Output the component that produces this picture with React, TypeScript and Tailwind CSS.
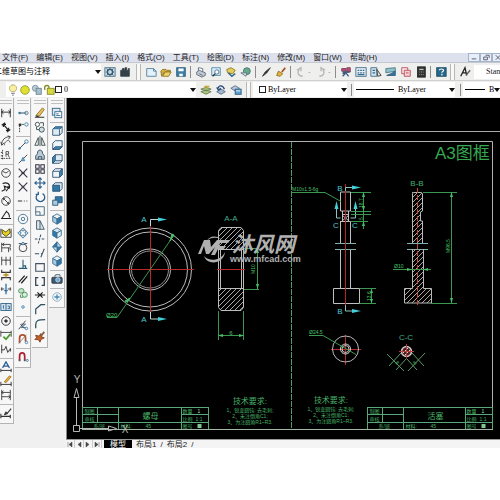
import { ReactNode } from "react";

const icons: Record<string, ReactNode> = {
  // dimension toolbar
  linear: <path d="M2 2v10M12 2v10M2 6h10M4 4L2 6l2 2M10 4l2 2-2 2" stroke="#222" />,
  aligned: <path d="M2 5l4-3M8 13l4-3M4 4l6 7M4 7V4h3M10 8v3H7" stroke="#222" strokeWidth="1.4" />,
  arc: (
    <g>
      <path d="M2 11c0-5 4-9 9-9M1 8l1 4 3-3M9 1l3 1-2 3" stroke="#333" />
      <path d="M5 12c0-3 2-5 5-6l2 3" stroke="#555" />
    </g>
  ),
  ordinate: (
    <g>
      <path d="M3 1v12M1 11h11M1 4h3M1 8h3" stroke="#333" strokeDasharray="2 1" />
      <path d="M7 9V3h3v3H7M9 6l2 4" stroke="#444" />
    </g>
  ),
  radius: (
    <g stroke="#333">
      <circle cx="7" cy="7" r="5" />
      <path d="M7 7l-4-2M7 7l3-2" />
    </g>
  ),
  jogged: <path d="M3 3c5-2 9 0 8 5M2 12l4-2-1-4 5 2-3 4M9 6l2 3" stroke="#222" strokeWidth="1.3" />,
  diameter: (
    <g stroke="#333">
      <circle cx="7" cy="7" r="5" />
      <path d="M4 4l6 6M4 6V4h2M10 8v2H8" />
    </g>
  ),
  angular: <path d="M8 2L2 11h11M7 3c3 1 4 3 4 7" stroke="#222" strokeWidth="1.2" />,
  quick: (
    <g>
      <path d="M1 2v10h12V2" stroke="#333" />
      <path d="M2 3l5 3 4-4 1 5-5 4-4-3z" fill="#e8d020" stroke="#4a4210" />
    </g>
  ),
  baseline: <path d="M2 2v11M2 4h10v3M2 8h10v3M5 2L3 4l2 2M10 8v5" stroke="#333" />,
  cont: <path d="M2 2v10M7 2v10M12 2v10M2 6h10" stroke="#333" />,
  space: (
    <g>
      <path d="M2 1v3h10V1M2 13v-3h10v3" stroke="#333" strokeWidth="1.3" />
      <path d="M4 7h6M7 4v6" stroke="#b89020" strokeWidth="1.6" />
    </g>
  ),
  dimbreak: (
    <g>
      <path d="M1 7h4M9 7h4M2 5v4M12 5v4" stroke="#333" />
      <path d="M7 1v12M5 9h4" stroke="#2b6fa0" strokeWidth="1.5" />
    </g>
  ),
  tolerance: (
    <g>
      <rect x="1" y="3" width="12" height="8" stroke="#2b5f85" fill="#cfe0ee" />
      <path d="M7 3v8M4 5v4M9 6h2v3H9" stroke="#2b5f85" />
    </g>
  ),
  center: (
    <g stroke="#222">
      <circle cx="7" cy="7" r="5" />
      <path d="M7 5v4M5 7h4" strokeWidth="1.5" />
    </g>
  ),
  inspect: (
    <g>
      <path d="M1 2v7M13 2v7M1 4h12" stroke="#333" />
      <path d="M4 9l3 3 5-6" stroke="#4a9a30" strokeWidth="2" />
    </g>
  ),
  joglinear: <path d="M2 2v10M2 8h3l2-4 2 7 2-3h2M12 6v4" stroke="#222" />,
  textedit: (
    <g>
      <path d="M3 8l4-7 4 7M4 6h6" stroke="#2b5f95" strokeWidth="1.5" />
      <path d="M1 9v4M13 9v4M1 11h12" stroke="#222" />
    </g>
  ),
  pencil: (
    <g>
      <path d="M5 8l6-7 2 1-6 7z" fill="#e0b040" stroke="#a87820" />
      <path d="M1 8v5M13 8v5M1 11h12" stroke="#222" />
    </g>
  ),
  update: <path d="M2 1v12M12 1v12M2 4h10M2 9h10M4 2L2 4l2 2M10 7l2 2-2 2" stroke="#333" />,
  brush: <path d="M1 8v5M12 9v4M1 11h11M5 9l3-1 5-6M5 9l2-3 2 2" stroke="#333" strokeWidth="1.3" />,
  // object snap
  track: (
    <g>
      <path d="M3 7h8" stroke="#333" />
      <circle cx="3" cy="7" r="1.5" fill="#3a7ca5" />
      <circle cx="11" cy="7" r="2" stroke="#3a7ca5" />
    </g>
  ),
  from: (
    <g>
      <path d="M3 13V4h6" stroke="#333" strokeDasharray="2 1" />
      <circle cx="11" cy="4" r="2" stroke="#3a7ca5" />
      <rect x="2" y="3" width="3" height="3" fill="#333" />
    </g>
  ),
  endpoint: (
    <g>
      <path d="M2 12l8-8" stroke="#333" />
      <circle cx="11" cy="3" r="2" stroke="#3a7ca5" />
      <circle cx="3" cy="11" r="1" fill="#3a7ca5" stroke="#3a7ca5" />
    </g>
  ),
  midpoint: (
    <g>
      <path d="M2 12L12 2" stroke="#333" />
      <path d="M5 9l2-4 2 4z" fill="#8ab4d0" stroke="#3a7ca5" />
    </g>
  ),
  intersect: <path d="M2 2l10 10M12 2L2 12M5 7h4" stroke="#334" strokeWidth="1.3" />,
  apparent: <path d="M2 2l4 4M8 8l4 4M12 2L8 6M6 8l-4 4M6 6h2v2H6z" stroke="#334" strokeWidth="1.2" />,
  extension: <path d="M1 7h5M8 7h1M11 7h1" stroke="#333" strokeWidth="1.2" />,
  centersnap: (
    <g stroke="#3a6c8c">
      <circle cx="7" cy="7" r="5.5" />
      <circle cx="7" cy="7" r="2" />
    </g>
  ),
  quadrant: (
    <g stroke="#3a7ca5">
      <circle cx="7" cy="7" r="4" stroke="#555" />
      <path d="M7 1l2 2-2 2-2-2zM7 9l2 2-2 2-2-2zM3 5l2 2-2 2-2-2zM11 5l2 2-2 2-2-2z" fill="#c0d8e8" />
    </g>
  ),
  tangent: (
    <g stroke="#333">
      <circle cx="7" cy="8" r="4.5" />
      <path d="M2 3h10" />
      <circle cx="7" cy="3" r="1.5" fill="#b8d4e6" stroke="#3a7ca5" />
    </g>
  ),
  perp: <path d="M7 1v10M2 11h10M7 8h3v3" stroke="#2b5f75" strokeWidth="1.3" />,
  parallel: <path d="M2 11L9 3M5 12l7-8" stroke="#222" strokeWidth="1.5" />,
  insert: (
    <g stroke="#3a8a50">
      <rect x="2" y="2" width="6" height="5" rx="2" fill="#c8e4cc" />
      <circle cx="9" cy="9" r="3" fill="#d8eed8" />
      <path d="M4 9v3h3" />
    </g>
  ),
  node: <circle cx="7" cy="7" r="1.5" stroke="#3a7ca5" />,
  nearest: (
    <g>
      <path d="M2 12l8-10M4 6l5 5" stroke="#333" />
      <path d="M5 6h5l-5 4h5" stroke="#3a5c7c" />
      <circle cx="11" cy="11" r="1.5" stroke="#3a7ca5" />
    </g>
  ),
  nosnap: (
    <g>
      <path d="M3 12V6c0-5 7-5 7 0v4" stroke="#b05030" strokeWidth="2" />
      <path d="M2 12L11 2" stroke="#777" />
      <circle cx="11" cy="11" r="1.5" stroke="#3a7ca5" />
    </g>
  ),
  magnet: (
    <g>
      <path d="M3 11V6c0-5 6-5 6 0v5" stroke="#b02030" strokeWidth="2" />
      <path d="M2 11h2M8 11h2" stroke="#555" strokeWidth="2" />
      <circle cx="12" cy="11" r="1.2" stroke="#3a7ca5" />
    </g>
  ),
  // modify
  erase: (
    <g>
      <path d="M3 9l7-8 2 2-6 8z" fill="#e8c060" stroke="#8a6a20" />
      <path d="M1 12h11M2 10l4 2" stroke="#333" strokeWidth="1.3" />
    </g>
  ),
  copy: (
    <g stroke="#344">
      <circle cx="4" cy="4" r="2.5" />
      <circle cx="9" cy="10" r="3" fill="#cfdfea" />
      <path d="M7 2h4v4M3 7v3h3" />
    </g>
  ),
  mirror: <path d="M5 3v9H1zM9 3v9h4zM7 1v12" stroke="#344" />,
  offset: (
    <g stroke="#345">
      <path d="M2 12V8c1-2 2-1 2-3 0-5 6-5 6 0 0 2 2 1 2 3v4z" fill="#b8ccd8" />
      <path d="M5 12V9h4v3" />
    </g>
  ),
  array: <path d="M2 2h4v4H2zM8 2h4v4H8zM2 8h4v4H2zM8 8h4v4H8z" stroke="#334" strokeWidth="1.2" />,
  move: <path d="M7 1v12M1 7h12M5 3l2-2 2 2M5 11l2 2 2-2M3 5L1 7l2 2M11 5l2 2-2 2" stroke="#2b5f8c" strokeWidth="1.3" />,
  rotate: <path d="M10 3a5 5 0 1 1-5 0M5 1v3H2" stroke="#2b5f8c" strokeWidth="1.5" />,
  scale: <path d="M2 2h10v10H2zM2 8h5v4" stroke="#3a6078" />,
  stretch: <path d="M3 2v10h9L7 2zM7 2v10" stroke="#3a5060" fill="#dde8ee" />,
  trim: <path d="M1 7h4M9 7h3M8 2L5 12" stroke="#3a5060" strokeDasharray="3 1" strokeWidth="1.2" />,
  extend: <path d="M1 8h5M8 8h2M12 2L8 12" stroke="#3a5060" strokeWidth="1.2" />,
  breakpoint: <path d="M2 3h10v9H2zM5 3h4" stroke="#456" strokeWidth="1.3" />,
  breaks: <path d="M5 3H2v9h3M9 3h3v9H9" stroke="#345" strokeWidth="1.5" />,
  join: <path d="M1 7h12M4 4l3 3-3 3M10 4L7 7l3 3" stroke="#222" strokeWidth="1.4" />,
  chamfer: <path d="M2 13V7l6-5h5" stroke="#2b5060" strokeWidth="1.4" />,
  fillet: <path d="M2 13V9c0-5 3-6 11-6" stroke="#2b5060" strokeWidth="1.5" />,
  explode: (
    <g>
      <path d="M2 5l4 1 2-3 1 4 3 1-4 2-1 3-2-3-4 0 2-2z" fill="#c06028" stroke="#803818" />
      <path d="M8 6l4-5" stroke="#806040" strokeWidth="2" />
    </g>
  ),
  // views
  named: (
    <g stroke="#2b5f85">
      <rect x="1.5" y="1.5" width="9" height="8" fill="#dce9f3" />
      <rect x="4.5" y="5.5" width="8" height="7" fill="#fff" />
      <path d="M6 10h5M6 8h3" />
    </g>
  ),
  top: (
    <g stroke="#2b5070">
      <path d="M2 5l3-3h8l-3 3z" fill="#3f88b8" />
      <path d="M2 5v7h8V5M10 12l3-3V2" fill="#dceaf2" />
    </g>
  ),
  bottom: (
    <g stroke="#2b5070">
      <path d="M2 5l3-3h8v7l-3 3H2z" fill="#eef4f8" />
      <path d="M2 12l3-3h8l-3 3z" fill="#3f88b8" />
    </g>
  ),
  left: (
    <g stroke="#2b5070">
      <path d="M2 5l3-3h8v7l-3 3H2z" fill="#dceaf2" />
      <path d="M2 5l3-3v7l-3 3z" fill="#3f88b8" />
      <path d="M5 9h8" />
    </g>
  ),
  right: (
    <g stroke="#2b5070">
      <path d="M2 5l3-3h8v7l-3 3H2zM2 5h8" fill="#eef4f8" />
      <path d="M10 5l3-3v7l-3 3z" fill="#3f88b8" />
    </g>
  ),
  front: (
    <g stroke="#2b5070">
      <path d="M2 5l3-3h8v7l-3 3z" fill="#dceaf2" />
      <path d="M2 5h8v7H2z" fill="#2f78a8" />
    </g>
  ),
  back: (
    <g stroke="#2b5070">
      <path d="M5 2h8v7H5z" fill="#2f78a8" />
      <path d="M2 6h6v6H2z" fill="#a8cbe0" />
    </g>
  ),
  isoSW: (
    <g stroke="#3a6c90">
      <path d="M7 1l5 3-5 3-5-3z" fill="#e8f2f8" />
      <path d="M2 4l5 3v6l-5-3z" fill="#a8cbe0" />
      <path d="M12 4L7 7v6l5-3z" fill="#2f78a8" />
    </g>
  ),
  isoSE: (
    <g stroke="#3a6c90">
      <path d="M7 1l5 3-5 3-5-3z" fill="#d0e4f0" />
      <path d="M2 4l5 3v6l-5-3z" fill="#2f78a8" />
      <path d="M12 4L7 7v6l5-3z" fill="#dceaf2" />
    </g>
  ),
  isoNE: (
    <g stroke="#3a6c90">
      <path d="M7 1l5 6-5 6-5-6z" fill="#c8e0ee" />
      <path d="M7 1L2 7h5zM7 13l5-6H7z" fill="#2f78a8" />
    </g>
  ),
  camera: (
    <g>
      <rect x="1" y="5" width="12" height="7" rx="1" fill="#405868" stroke="#303c48" />
      <path d="M4 4l2-2h4l1 2" stroke="#708898" strokeWidth="1.5" />
      <circle cx="8" cy="8" r="2.5" fill="#58a8e0" stroke="#dde" />
    </g>
  ),
  wheel: (
    <g stroke="#8aa8bc">
      <circle cx="7" cy="7" r="5" fill="#eef4f8" />
      <path d="M7 4v6M4 7h6" stroke="#4a88b0" strokeWidth="1.5" />
    </g>
  ),
  // standard toolbar
  gear: (
    <g>
      <rect x="1" y="2" width="12" height="10" fill="#c8dce8" stroke="#4a7088" />
      <circle cx="7" cy="7" r="3" stroke="#38586c" strokeWidth="1.6" />
      <path d="M7 2v2M7 10v2M2 7h2M10 7h2M3 3l2 2M11 11L9 9M11 3L9 5M3 11l2-2" stroke="#38586c" />
    </g>
  ),
  home: <path d="M2 12V5h2V3h2v2h1V2h2v3h2V3h1v9z" fill="#344048" stroke="#344048" />,
  newfile: (
    <g>
      <path d="M2 3h8l3 3v6H2z" fill="#e4f1f9" stroke="#4a7c9c" />
      <path d="M10 3v3h3" stroke="#4a7c9c" />
    </g>
  ),
  open: (
    <g>
      <path d="M1 6l2-2h4l1 1h4v2H5l-3 5z" fill="#d8b040" stroke="#8a7020" />
      <path d="M3 12l3-5h7l-3 5z" fill="#f0d068" stroke="#8a7020" />
    </g>
  ),
  save: (
    <g>
      <rect x="2" y="2" width="10" height="10" fill="#3f80a8" stroke="#2a5878" />
      <path d="M4 3h6v3H4zM5 9h4v3H5z" fill="#fff" />
    </g>
  ),
  print: (
    <g stroke="#5a6878">
      <path d="M4 6V2l5 1v4" fill="#fff" />
      <path d="M2 7l3-2 7 3v3l-4 2-6-3z" fill="#c0cad4" />
      <path d="M5 9l4 2" />
    </g>
  ),
  preview: (
    <g>
      <path d="M2 2h10v9H2z" fill="#dcebf5" stroke="#4a88ac" />
      <circle cx="8" cy="7" r="2.5" fill="#fff" stroke="#3a6888" />
      <path d="M6 9l-3 3" stroke="#333" strokeWidth="1.5" />
    </g>
  ),
  publish: (
    <g>
      <path d="M2 4l5-2 5 3-3 4-6-1z" fill="#e4cc58" stroke="#887828" />
      <path d="M4 8l4 4 4-3" stroke="#3a6888" strokeWidth="1.8" />
    </g>
  ),
  globe: (
    <g>
      <circle cx="8" cy="6" r="4" fill="#6aa888" stroke="#3a7078" />
      <path d="M1 8l6 4 1-4z" fill="#d8e0e4" stroke="#587078" />
    </g>
  ),
  darkbrush: <path d="M3 12l3-5 6-5-4 6z" fill="#333" stroke="#333" />,
  match: (
    <g>
      <path d="M2 11l2-5 5 3-3 3z" fill="#e4b838" stroke="#8a6420" />
      <path d="M8 7l4-5" stroke="#a05020" strokeWidth="2" />
    </g>
  ),
  undo: <path d="M9 12c-5 0-7-4-4-8M2 5l5-3v4" stroke="#b8b8b8" strokeWidth="1.6" />,
  redo: <path d="M5 12c5 0 7-4 4-8M12 5L7 2v4" stroke="#b8b8b8" strokeWidth="1.6" />,
  props: (
    <g>
      <path d="M2 3h5v3H2zM8 2h4v5H8z" fill="#c05078" stroke="#783858" />
      <path d="M3 7h8M3 9l4-1 3 4M3 12l3-3" stroke="#3a5878" strokeWidth="1.5" />
    </g>
  ),
  center2: (
    <g>
      <rect x="1" y="2" width="12" height="10" fill="#e8f2f8" stroke="#3a6888" />
      <path d="M3 5h2M6 5h2M9 5h2M3 8h2M6 8h2M9 8h2M3 10h8" stroke="#3a6888" strokeWidth="1.5" />
    </g>
  ),
  palettes: (
    <g>
      <path d="M1 2h7v10H1z" fill="#d0e4f0" stroke="#3a6888" />
      <path d="M3 5h3M3 8h3" stroke="#3a6888" strokeWidth="1.5" />
      <path d="M8 4l5 7-4 1z" fill="#e0e0e0" stroke="#333" />
    </g>
  ),
  sheet: (
    <g>
      <path d="M1 3l11-1v4L1 8z" fill="#90c0c8" stroke="#487888" />
      <path d="M2 11h10V6L7 9z" fill="#3878a0" stroke="#285878" />
    </g>
  ),
  markup: (
    <g stroke="#b84858">
      <path d="M2 2h7v7H2z" fill="#fbe8ea" />
      <path d="M5 5h7v7H5z" fill="#f4d0d4" />
      <path d="M7 8h3" />
    </g>
  ),
  calc: (
    <g>
      <rect x="3" y="1" width="9" height="12" fill="#333" stroke="#222" />
      <path d="M5 4h5" stroke="#b8c8c8" strokeWidth="1.5" />
      <path d="M5 7h1M7 7h1M9 7h1M5 10h1M7 10h1M9 10h1" stroke="#aaa" />
    </g>
  ),
  help: (
    <g>
      <rect x="2" y="2" width="11" height="10" fill="#28688c" stroke="#184860" />
      <path d="M5 5c0-2 5-2 5 0 0 2-2 1-2 3M8 9v2" stroke="#fff" strokeWidth="1.4" />
    </g>
  ),
  style: (
    <g>
      <path d="M2 12L7 2l2 9M4 8h5" stroke="#222" strokeWidth="1.5" />
      <path d="M8 11l5-6" stroke="#555" strokeWidth="1.5" />
    </g>
  ),
  layer1: (
    <g>
      <path d="M1 6l6-2 6 2-6 2zM1 9l6-2 6 2-6 3z" fill="#a8c878" stroke="#687858" />
      <path d="M5 3h6" stroke="#d0a830" strokeWidth="2" />
    </g>
  ),
  layer2: (
    <g>
      <path d="M2 9l5-3 5 3-5 3z" fill="#a0b8d0" stroke="#506880" />
      <path d="M11 6C9 1 4 1 4 5M2 4l2 3 3-2" stroke="#284878" strokeWidth="1.6" />
    </g>
  ),
  layer3: (
    <g>
      <path d="M1 5l5-3 5 3-5 3z" fill="#b8cce0" stroke="#506880" />
      <rect x="6" y="6" width="7" height="6" fill="#58a0d0" stroke="#285878" />
      <path d="M7 8h5" stroke="#fff" />
    </g>
  ),
  bulb: (
    <g>
      <path d="M5 9c-4-3-2-8 2-8s6 5 2 8z" fill="#f8f0a0" stroke="#a8a068" />
      <path d="M5 11h4M6 13h2" stroke="#667" />
    </g>
  ),
  sun: <circle cx="7" cy="7" r="5" fill="#dfe030" stroke="#909828" />,
  freeze: (
    <g>
      <circle cx="5" cy="5" r="3.5" fill="#b8ccd4" stroke="#7890a0" />
      <rect x="6" y="5" width="6" height="7" fill="#a8c0cc" stroke="#688090" />
    </g>
  ),
  lock: (
    <g>
      <path d="M2 7V4c0-3 5-3 5 0v3" stroke="#808820" strokeWidth="1.5" />
      <rect x="5" y="5" width="8" height="7" fill="#d8d840" stroke="#888820" />
    </g>
  ),
};

const Icon = ({ name }: { name: string }) => (
  <svg viewBox="0 0 14 14" className="size-3 shrink-0" fill="none" aria-hidden="true">
    {icons[name]}
  </svg>
);

const ToolButton = ({ name }: { name: string }) => (
  <button type="button" aria-label={name} className="flex h-[14px] w-[15px] shrink-0 items-center justify-center">
    <Icon name={name} />
  </button>
);

const Sep = () => <span className="mx-[2px] h-3 w-px shrink-0 bg-[#8c8c8c]" />;
const Grip = () => <span className="mx-[2px] h-4 w-[5px] shrink-0 border-x border-[#b8b8b8] bg-[#f8f8f8]" />;

const Caret = () => (
  <svg viewBox="0 0 6 4" className="h-1 w-[6px] shrink-0" aria-hidden="true">
    <path d="M0 0h6L3 4z" fill="#111" />
  </svg>
);

interface PickerProps {
  label: string;
  value: string;
  className: string;
  textClass: string;
  children?: ReactNode;
}

const Picker = ({ label, value, className, textClass, children }: PickerProps) => (
  <label className={`flex h-[15px] items-center bg-white ${className}`}>
    {children}
    <select aria-label={label} className={`min-w-0 flex-1 appearance-none bg-transparent text-[8px] leading-3 text-black outline-none ${textClass}`}>
      <option>{value}</option>
    </select>
    <Caret />
  </label>
);

const menus = [
  "文件(F)", "编辑(E)", "视图(V)", "插入(I)", "格式(O)", "工具(T)",
  "绘图(D)", "标注(N)", "修改(M)", "窗口(W)", "帮助(H)",
];

const columns = [
  [
    ["linear", "aligned", "arc", "ordinate"],
    ["radius", "jogged", "diameter", "angular"],
    ["quick", "baseline", "cont", "space", "dimbreak"],
    ["tolerance", "center", "inspect", "joglinear"],
    ["textedit", "pencil", "update"],
    ["brush"],
  ],
  [
    ["track", "from"],
    ["endpoint", "midpoint", "intersect", "apparent", "extension"],
    ["centersnap", "quadrant", "tangent"],
    ["perp", "parallel", "insert", "node"],
    ["nearest", "nosnap"],
    ["magnet"],
  ],
  [
    [
      "erase", "copy", "mirror", "offset", "array", "move", "rotate", "scale", "stretch",
      "trim", "extend", "breakpoint", "breaks", "join", "chamfer", "fillet", "explode",
    ],
  ],
  [
    ["named"],
    ["top", "bottom", "left", "right", "front", "back"],
    ["isoSW", "isoSE", "isoNE", "isoSW"],
    ["camera"],
    ["wheel"],
  ],
];

const MenuBar = () => (
  <nav className="flex h-[9px] items-center overflow-hidden bg-[#dde1ee] pl-[2px] text-[8px] leading-[9px] text-[#222]">
    {menus.map((menu) => (
      <button key={menu} type="button" className="mr-2 h-[9px] shrink-0 whitespace-nowrap">
        {menu}
      </button>
    ))}
    <div className="-mr-1 ml-auto flex shrink-0">
      {["M3 5h5", "M3 3h4v3H3zM5 1h4v3", "M3 1l5 5M8 1L3 6"].map((d, i) => (
        <button key={d} type="button" aria-label={["最小化", "还原", "关闭"][i]} className="h-[9px] w-3 border border-[#a4b4cc] bg-[#e8eef8]">
          <svg viewBox="0 0 11 7" className="h-[7px] w-full" fill="none" stroke="#556">
            <path d={d} />
          </svg>
        </button>
      ))}
    </div>
  </nav>
);

const StandardBar = () => (
  <div className="flex h-[18px] items-center overflow-hidden border-t border-[#c4c8d0]">
    <Picker label="工作空间" value="二维草图与注释" className="w-[101px] shrink-0" textClass="-ml-[6px]" />
    <span className="w-px shrink-0" />
    <ToolButton name="gear" />
    <ToolButton name="home" />
    <span className="w-[2px] shrink-0" />
    <Grip />
    <ToolButton name="newfile" />
    <ToolButton name="open" />
    <ToolButton name="save" />
    <Sep />
    {["print", "preview", "publish", "globe"].map((n) => <ToolButton key={n} name={n} />)}
    <Sep />
    <ToolButton name="darkbrush" />
    <ToolButton name="match" />
    <Sep />
    <ToolButton name="undo" />
    <span className="w-[5px] shrink-0 text-[8px] leading-3 text-[#999]">-</span>
    <ToolButton name="redo" />
    <span className="w-[5px] shrink-0 text-[8px] leading-3 text-[#999]">-</span>
    <Sep />
    {["props", "center2", "palettes", "sheet", "markup", "calc"].map((n) => <ToolButton key={n} name={n} />)}
    <Sep />
    <ToolButton name="help" />
    <Grip />
    <ToolButton name="style" />
    <input
      aria-label="文字样式"
      defaultValue="Standard"
      className="ml-[2px] h-[14px] min-w-0 flex-1 bg-white pl-3 font-['Liberation_Serif',serif] text-[8px] leading-3 text-[#222] outline-none"
    />
  </div>
);

const LayerBar = () => (
  <div className="flex h-[18px] items-center overflow-hidden border-t border-[#d0d0d0]">
    <span className="h-3 w-[6px] shrink-0" />
    <Picker label="图层" value="0" className="w-[190px] shrink-0 pl-px" textClass="pl-[2px] font-['Liberation_Serif',serif]">
      <Icon name="bulb" />
      <Icon name="sun" />
      <Icon name="freeze" />
      <Icon name="lock" />
      <span className="size-[7px] shrink-0 border border-[#222] bg-white" />
    </Picker>
    <span className="w-[2px] shrink-0" />
    {["layer1", "layer2", "layer3"].map((n) => <ToolButton key={n} name={n} />)}
    <span className="w-px shrink-0" />
    <Grip />
    <Picker label="颜色" value="ByLayer" className="w-[94px] shrink-0" textClass="pl-[2px] font-['Liberation_Serif',serif]">
      <span className="ml-[6px] size-[7px] shrink-0 border border-[#222]" />
    </Picker>
    <span className="w-[2px] shrink-0" />
    <Sep />
    <Picker label="线型" value="ByLayer" className="w-[101px] shrink-0 pl-[2px]" textClass="pl-1 font-['Liberation_Serif',serif]">
      <span className="h-px w-[38px] shrink-0 bg-black" />
    </Picker>
    <span className="w-[3px] shrink-0" />
    <Sep />
    <Picker label="线宽" value="ByLayer" className="min-w-0 flex-1 overflow-hidden pl-[2px]" textClass="pl-1 font-['Liberation_Serif',serif]">
      <span className="h-px w-5 shrink-0 bg-black" />
    </Picker>
  </div>
);

const ToolColumn = ({ groups }: { groups: string[][] }) => (
  <div className="flex w-4 flex-col items-center border-r border-b border-[#b4b4b4] bg-[#f7f7f7] pb-[3px]">
    <span className="my-[2px] h-[4px] w-3 border-y border-[#c0c0c0]" />
    {groups.map((group, i) => (
      <div key={i} className="flex flex-col items-center">
        {i > 0 && <span className="my-px h-[2px] w-[14px] border-b border-[#b8b8b8]" />}
        {group.map((name, j) => <ToolButton key={j} name={name} />)}
      </div>
    ))}
  </div>
);

const TitleBlock = ({ x, right, name }: { x: number; right: number; name: string }) => (
  <g>
    <path
      d={`M${x} 407.5H${right}M${x} 414.5h36M${right - 27} 414.5h27M${x} 422.5H${right}M${x + 15} 407v15M${x + 36} 407v22M${right - 27} 407v22M${x} 407v22M${right} 407v22`}
      stroke="#58a878"
    />
    <g fill="#48b468" fontSize="5">
      <text x={x + 2} y="413">制图</text>
      <text x={x + 2} y="421">审核</text>
      <text x={x + 11} y="428">系/班</text>
      <text x={x + 38} y="428">材料:</text>
      <text x={x + 63} y="428">45</text>
      <text x={right - 26} y="413">数量</text>
      <text x={right - 11} y="413" fill="#a0e0b0">1</text>
      <text x={right - 26} y="421">比例</text>
      <text x={right - 13} y="421">1:1</text>
      <text x={right - 26} y="428">图号</text>
      <text x={x + 68} y="419" fontSize="8" textAnchor="middle">{name}</text>
    </g>
    <rect x={right - 11} y="424" width="4" height="4" fill="#80c890" />
  </g>
);

const Notes = ({ x, y }: { x: number; y: number }) => (
  <g fill="#48b468" textAnchor="middle" fontSize="5">
    <text x={x} y={y} fontSize="8">技术要求:</text>
    <text x={x} y={y + 8}>1、锐变圆钝: 去毛刺;</text>
    <text x={x} y={y + 14}>2、未注倒角C1;</text>
    <text x={x} y={y + 20}>3、为注圆角R1~R3.</text>
  </g>
);

const Drawing = () => (
  <svg
    viewBox="66 98 434 341"
    className="block w-full bg-black font-['Liberation_Sans','Noto_Sans_CJK_SC',sans-serif]"
    fill="none"
    role="img"
    aria-label="模型空间"
  >
    <defs>
      <pattern id="hatch" width="5" height="5" patternUnits="userSpaceOnUse">
        <path d="M-1 6L6 -1M-1 1l2-2M4 6l2-2" stroke="#a8a8a8" />
      </pattern>
      <pattern id="hatchShaft" width="5" height="5" patternUnits="userSpaceOnUse">
        <path d="M-1 6L6 -1M-1 1l2-2M4 6l2-2" stroke="#b8a098" />
      </pattern>
    </defs>

    {/* sheet border */}
    <path d="M66.5 98v341" stroke="#888" />
    <path d="M67 131.5H500" stroke="#aaa" />
    <path d="M82.5 429V141.5h410V429" stroke="#b0b0b0" />
    <path d="M82 429.5h411" stroke="#a0b8a4" />
    <path d="M291.5 142v287" stroke="#4f9a62" strokeDasharray="6 1" />
    <text x="435" y="159" fontSize="17" fill="#35a850">A3图框</text>

    {/* nut, front view */}
    <g stroke="#bcbcbc">
      <circle cx="150" cy="269.5" r="41.5" />
      <circle cx="150" cy="269.5" r="37.5" />
      <circle cx="150" cy="269.5" r="20.5" />
      <circle cx="150" cy="269.5" r="18.5" stroke="#909090" />
    </g>
    <path d="M107 269.5h87M150.5 226v87" stroke="#b82828" />
    <path d="M107 317.5h10L174 235" stroke="#3a9850" />
    <path d="M172 234l2 1-4 6zM127 302l3-4-5 3z" fill="#48c068" stroke="#48c068" />
    <text x="106" y="317" fontSize="6" fill="#48c068">Ø20</text>
    <path d="M150.5 226v-6.5h9M150.5 312v7h9" stroke="#c0d8d8" />
    <path d="M158 217.5l9 2-9 2zM158 317l9 2-9 2z" fill="#40d0d8" />
    <g fill="#50c8d0" fontSize="8" textAnchor="middle">
      <text x="144" y="222">A</text>
      <text x="144" y="322">A</text>
    </g>

    {/* nut, section */}
    <text x="231" y="221" fontSize="8" fill="#40a888" textAnchor="middle">A-A</text>
    <path d="M221 227.5h20l3 3V249h-26v-18.5zM218 289h26v18.5l-3 3h-20l-3-3z" fill="url(#hatch)" />
    <path d="M221 227.5h20l2.5 3v77l-2.5 3h-20l-2.5-3v-77zM218 249.5h26M218 288.5h26M220.5 249v40M241.5 249v40" stroke="#bcbcbc" />
    <path d="M217 269.5h28" stroke="#b82828" />
    <path d="M244 248.5h15M244 289.5h15M257.5 248v41M218.5 311v29M243.5 311v29M218 335.5h26" stroke="#3a9850" />
    <path d="M218 335.5l5-1.5v3zM244 335.5l-5-1.5v3zM257.5 248l-1.5 5h3zM257.5 289l-1.5-5h3z" fill="#48c068" />
    <text x="231" y="335" fontSize="6" fill="#48c068" textAnchor="middle">6</text>
    <text transform="translate(255 274) rotate(-90)" fontSize="5" fill="#48c068">M10</text>

    {/* shaft */}
    <g stroke="#c0c0c0">
      <path d="M340.5 211v-19h10v19zM342.5 211v10M348.5 211v10M340.5 221.5h10V243M340.5 221v22M340.5 249v39M350.5 249v39M342 214.5h7" />
      <path d="M333.5 288.5h26v15h-26z" />
      <path d="M342 215l7 6M349 215l-7 6" />
    </g>
    <path d="M335 243.5h21M335 249.5h21M407 243.5h21M407 249.5h21" stroke="#80b0b0" />
    <path d="M345.5 184v124" stroke="#b82828" />
    <path d="M345.5 191v-3.5h7M345.5 305v6h7M336.5 208v10h4M355.5 208v10h-5" stroke="#90c0c0" />
    <path d="M352 185.5l9 2-9 2zM352 309l9 2-9 2zM334.5 209l2-8 2 8zM353.5 209l2-8 2 8z" fill="#40d0d8" />
    <g fill="#50c8d0" fontSize="8" textAnchor="middle">
      <text x="340" y="191">B</text>
      <text x="340" y="314">B</text>
      <text x="336" y="228">C</text>
      <text x="355" y="228">C</text>
    </g>
    <path d="M291 192.5h34l16 9M351 192.5h20M351 211.5h20M351 214.5h20M351 221.5h17M363.5 192v37M360 288.5h16M360 303.5h16M371.5 289v14" stroke="#3a9850" />
    <path d="M363.5 192l-1.5 5h3zM363.5 211l-1.5-5h3zM363.5 221l-1.5 5h3zM371.5 289l-1.5 4h3zM371.5 303l-1.5-4h3z" fill="#48c068" />
    <g fill="#48c068" fontSize="5">
      <text x="292" y="191">M10x1.5-6g</text>
      <text transform="translate(363 208) rotate(-90)">18.7</text>
      <text transform="translate(363 220) rotate(-90)">5</text>
      <text transform="translate(371 301) rotate(-90)">13.6</text>
      <text x="309" y="334">Ø24.5</text>
    </g>

    {/* shaft end view */}
    <path d="M331 349.5h30M345.5 335v30" stroke="#b82828" />
    <circle cx="345.5" cy="349" r="13" stroke="#b8b8b8" />
    <circle cx="345.5" cy="349" r="5" stroke="#d8d8d8" />
    <circle cx="345.5" cy="349" r="3.5" stroke="#ccc" />
    <path d="M309 335.5h14l33 19" stroke="#3a9850" />

    {/* shaft section */}
    <text x="417" y="186" fontSize="8" fill="#40b070" textAnchor="middle">B-B</text>
    <path d="M413 192h9v19l-1 1v9h2v22h-11v-51zM412 249h11v39h8v15h-27v-15h8z" fill="url(#hatchShaft)" />
    <path d="M412.5 243v-49l1-1.5h8l1 1.5v17l-2 1v9h2v22M412.5 249v39.5h-8v14.500h27v-14.500h-8V249" stroke="#b4bcb8" />
    <path d="M417.5 188v118" stroke="#c84838" strokeDasharray="5 2" />
    <path d="M423 192.5h34M431 303.5h26M451.5 192v111M393 269.5h38" stroke="#3a9850" />
    <path d="M451.5 192l-1.5 5h3zM451.5 303l-1.5-5h3zM412 269.5l-5-1.5v3zM423 269.5l5-1.5v3z" fill="#48c068" />
    <text x="394" y="268" fontSize="5" fill="#48c068">Ø10</text>
    <text transform="translate(450 253) rotate(-90)" fontSize="5" fill="#48c068">M96.5</text>

    {/* cross section C-C */}
    <text x="406" y="340" fontSize="8" fill="#40a888" textAnchor="middle">C-C</text>
    <circle cx="406.5" cy="351.5" r="5" fill="#502020" stroke="#d0c8c8" strokeWidth="1.5" />
    <path d="M403 353l5-5M405 355l5-5" stroke="#d8d0d0" />
    <path d="M399 351.5h15M406.5 344v15" stroke="#b04040" />
    <path d="M387 354l17 17M425 353l-17 18M401 353l-12 13M406 359l-10 11M412 353l12 13M407 359l10 11" stroke="#5a9a68" />
    <g fill="#48c068" fontSize="5">
      <text transform="translate(395 363) rotate(45)">8</text>
      <text transform="translate(415 365) rotate(-45)">8</text>
    </g>

    <Notes x={250} y={404} />
    <Notes x={331} y={403} />
    <TitleBlock x={82.5} right={208.5} name="螺母" />
    <TitleBlock x={367.5} right={492.5} name="活塞" />

    {/* UCS icon */}
    <g stroke="#b8b8b8">
      <path d="M73.5 425.5h6v6h-6zM76.5 425v-28M74 397.5h5l-2.500-9zM80 428.5h28M108.5 426v5l8-2.500z" />
    </g>
    <g fill="#b8b8b8" fontSize="10" textAnchor="middle">
      <text x="77" y="383">Y</text>
      <text x="125" y="433">X</text>
    </g>

    {/* watermark */}
    <g fill="#b0b0b0">
      <text x="232" y="252" fontSize="21" fontWeight="bold" fontStyle="italic">沐风网</text>
      <text x="230" y="262" fontSize="9" fontWeight="bold">www.mfcad.com</text>
      <path d="M198 254l6-14h6l1 7 6-7h13l-2 3h-8l-1 3h7l-2 3h-6l-3 6h-4l4-8-6 7h-3l-2-8-3 8z" />
      <path d="M204 256c5 6 17 5 21-4-1 12-18 14-21 4zM207 241c3-4 9-4 14-2-5-4-12-3-14 2z" />
    </g>
  </svg>
);

const LayoutTabs = () => (
  <div className="flex h-[9px] items-center overflow-hidden border-t border-[#999] bg-[#f4f4f4] text-[8px] leading-[9px] text-[#222]">
    {["M2 1v5M6 1L3 3.5 6 6z", "M6 1L3 3.5 6 6z", "M2 1l3 2.5L2 6z", "M2 1l3 2.5L2 6zM6 1v5"].map((d, i) => (
      <button key={d} type="button" aria-label={["第一个", "上一个", "下一个", "最后一个"][i]} className="h-2 w-[9px] shrink-0 border-r border-[#ccc]">
        <svg viewBox="0 0 8 7" className="h-[7px] w-2" fill="#444" stroke="#444" strokeWidth="0.5">
          <path d={d} />
        </svg>
      </button>
    ))}
    <button type="button" className="ml-[2px] h-[9px] bg-black px-[6px] text-white">模型</button>
    <button type="button" className="ml-1 h-[9px]">布局1</button>
    <span className="mx-1">/</span>
    <button type="button" className="h-[9px]">布局2</button>
    <span className="ml-1">/</span>
  </div>
);

const App = () => {
  return (
    <main className="min-h-screen bg-white pt-[53px] font-['Liberation_Sans','Noto_Sans_CJK_SC',sans-serif]">
      <header className="bg-[#efefed]">
        <MenuBar />
        <StandardBar />
        <LayerBar />
      </header>
      <div className="flex bg-[#f0f0f0]">
        <aside className="-ml-[2px] flex shrink-0 items-start gap-px pr-px">
          {columns.map((groups, i) => <ToolColumn key={i} groups={groups} />)}
        </aside>
        <div className="min-w-0 flex-1">
          <Drawing />
          <LayoutTabs />
        </div>
      </div>
    </main>
  );
};

export default App;
